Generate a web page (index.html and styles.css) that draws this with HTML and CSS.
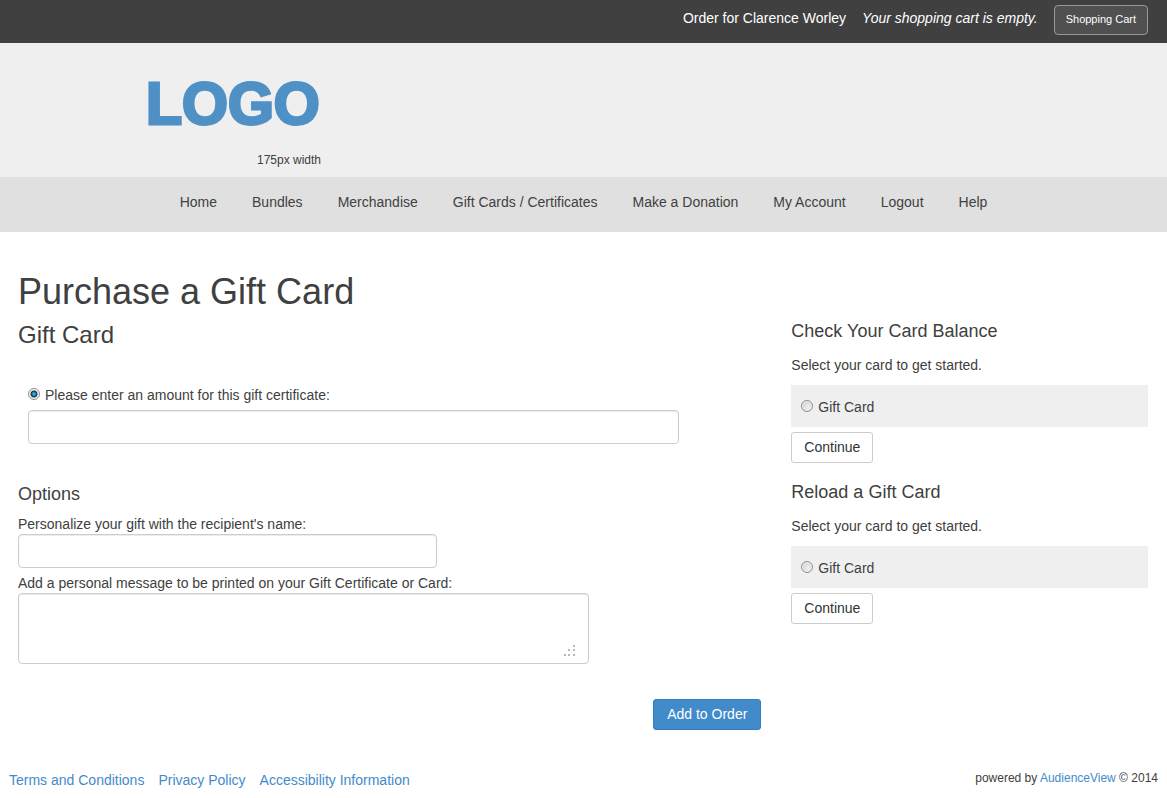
FILE: index.html
```
<!DOCTYPE html>
<html lang="en">
<head>
  <meta charset="UTF-8">
  <meta name="viewport" content="width=device-width, initial-scale=1">
  <title>Purchase a Gift Card</title>
  <link rel="stylesheet" href="styles.css">
</head>
<body>
<div class="topbar">
  <span>Order for Clarence Worley</span>
  <em>Your shopping cart is empty.</em>
  <button type="button" class="btn-cart">Shopping Cart</button>
</div>

<header class="header">
  <div class="header-inner">
    <div class="logo">
      <div class="logo-name">LOGO</div>
      <div class="logo-size">175px width</div>
    </div>
  </div>
</header>

<nav class="nav">
  <a href="#">Home</a>
  <a href="#">Bundles</a>
  <a href="#">Merchandise</a>
  <a href="#">Gift Cards / Certificates</a>
  <a href="#">Make a Donation</a>
  <a href="#">My Account</a>
  <a href="#">Logout</a>
  <a href="#">Help</a>
</nav>

<div class="page">
  <h1>Purchase a Gift Card</h1>
  <div class="row">
    <form class="main">
      <h2>Gift Card</h2>
      <div class="amount">
        <div class="choice">
          <input type="radio" id="amountOption" name="amountOption" checked>
          <label for="amountOption" id="amountLabel">Please enter an amount for this gift certificate:</label>
        </div>
        <input type="text" class="field" id="amount" aria-labelledby="amountLabel">
      </div>

      <h3>Options</h3>
      <label class="field-label" for="recipient">Personalize your gift with the recipient's name:</label>
      <input type="text" class="field field-name" id="recipient">
      <label class="field-label" for="message">Add a personal message to be printed on your Gift Certificate or Card:</label>
      <div class="message">
        <textarea class="field" id="message"></textarea>
        <svg class="grip" width="13" height="13" viewBox="0 0 13 13" fill="#b8b8b8" aria-hidden="true">
          <rect x="10" y="1" width="2" height="2"/>
          <rect x="5" y="5" width="2" height="2"/>
          <rect x="10" y="5" width="2" height="2"/>
          <rect x="1" y="10" width="2" height="2"/>
          <rect x="5" y="10" width="2" height="2"/>
          <rect x="10" y="10" width="2" height="2"/>
        </svg>
      </div>

      <div class="actions">
        <button type="button" class="btn btn-primary">Add to Order</button>
      </div>
    </form>

    <aside class="side">
      <form class="card-form">
        <h3>Check Your Card Balance</h3>
        <p>Select your card to get started.</p>
        <div class="choice choice-box">
          <input type="radio" id="balanceCard" name="balanceCard">
          <label for="balanceCard">Gift Card</label>
        </div>
        <button type="button" class="btn">Continue</button>
      </form>

      <form class="card-form">
        <h3>Reload a Gift Card</h3>
        <p>Select your card to get started.</p>
        <div class="choice choice-box">
          <input type="radio" id="reloadCard" name="reloadCard">
          <label for="reloadCard">Gift Card</label>
        </div>
        <button type="button" class="btn">Continue</button>
      </form>
    </aside>
  </div>
</div>

<footer class="footer">
  <div class="footer-links">
    <a href="#">Terms and Conditions</a>
    <a href="#">Privacy Policy</a>
    <a href="#">Accessibility Information</a>
  </div>
  <div class="powered">powered by <a href="#">AudienceView</a> © 2014</div>
</footer>
</body>
</html>
```

FILE: styles.css
```
* {
  box-sizing: border-box;
}

body {
  margin: 0;
  font-family: "Liberation Sans", Arial, sans-serif;
  font-size: 14px;
  line-height: 20px;
  color: #404040;
  background-color: #fff;
}

a {
  color: #428bca;
  text-decoration: none;
}

h1, h2, h3, p {
  margin: 0;
}

h1, h2, h3 {
  font-weight: normal;
}

h1 {
  font-size: 36px;
  line-height: 40px;
  margin-bottom: 9px;
}

h2 {
  font-size: 24px;
  line-height: 28px;
}

h3 {
  font-size: 18px;
  line-height: 20px;
}

button, input, textarea {
  font: inherit;
}

/* top bar */
.topbar {
  display: flex;
  justify-content: flex-end;
  align-items: flex-start;
  gap: 16px;
  padding: 8px 19px;
  height: 43px;
  color: #fff;
  background-color: #404040;
}

.btn-cart {
  margin-top: -3px;
  padding: 3px 11px 5px;
  height: 30px;
  font-size: 11px;
  color: #fff;
  background-color: #505050;
  border: 1px solid #999;
  border-radius: 4px;
}

/* header */
.header {
  padding: 34px 0 7px;
  background-color: #efefef;
}

.header-inner {
  max-width: 875px;
  margin: 0 auto;
}

.logo {
  width: 175px;
}

.logo-name {
  font-size: 59px;
  font-weight: bold;
  line-height: 54px;
  color: #4f90c5;
  -webkit-text-stroke: 3px #4f90c5;
}

.logo-size {
  margin-top: 19px;
  font-size: 12px;
  text-align: right;
}

.nav {
  display: flex;
  flex-wrap: wrap;
  justify-content: center;
  gap: 0 35px;
  padding: 15px 0 20px;
  background-color: #e0e0e0;
}

.nav a {
  color: #404040;
}

/* content */
.page {
  padding: 40px 4px 0 3px;
}

.page h1 {
  padding: 0 15px;
}

.row {
  display: grid;
  grid-template-columns: 2fr 1fr;
}

.main, .side {
  padding: 0 15px;
}

.amount {
  padding: 36px 10px 40px;
}

.choice {
  display: flex;
  align-items: center;
  gap: 5px;
}

.choice input {
  appearance: none;
  width: 12px;
  height: 12px;
  margin: 0 0 2px;
  border: 1px solid #8e8f8f;
  border-radius: 50%;
  background: radial-gradient(circle at 60% 60%, #f0f0f0, #c4c8cb);
  box-shadow: inset 0 0 0 1px #f4f4f4;
}

.choice input:checked {
  background: radial-gradient(circle, #5cc3f0 0, #1b6f9f 2px, #12354d 3px, #e8eaeb 4px);
}

.field {
  display: block;
  width: 100%;
  height: 34px;
  padding: 6px 12px;
  border: 1px solid #ccc;
  border-radius: 4px;
  background-color: #fff;
  box-shadow: inset 0 1px 1px rgba(0,0,0,0.08);
}

.amount .field {
  width: 90%;
  margin-top: 5px;
}

.main h3 {
  margin-bottom: 10px;
}

.field-label {
  display: block;
}

.field-name {
  max-width: 419px;
  margin-bottom: 5px;
}

.message {
  position: relative;
  max-width: 571px;
}

.message .field {
  height: 71px;
  resize: none;
}

.grip {
  position: absolute;
  right: 13px;
  bottom: 7px;
  pointer-events: none;
}

.actions {
  display: flex;
  justify-content: flex-end;
  margin-top: 35px;
}

.btn {
  height: 31px;
  padding: 0 12px 2px;
  color: #333;
  background-color: #fff;
  border: 1px solid #ccc;
  border-radius: 3px;
}

.btn-primary {
  padding: 0 13px 2px;
  color: #fff;
  background-color: #428bca;
  border-color: #357ebd;
}

.card-form {
  margin-bottom: 19px;
}

.card-form p {
  margin: 14px 0 10px;
}

.choice-box {
  padding: 12px 10px 10px;
  margin-bottom: 5px;
  background-color: #efefef;
}

/* footer */
.footer {
  display: flex;
  justify-content: space-between;
  padding: 38px 9px 8px;
}

.footer-links {
  display: flex;
  gap: 14px;
  padding-top: 2px;
}

.powered {
  font-size: 12px;
}
```
